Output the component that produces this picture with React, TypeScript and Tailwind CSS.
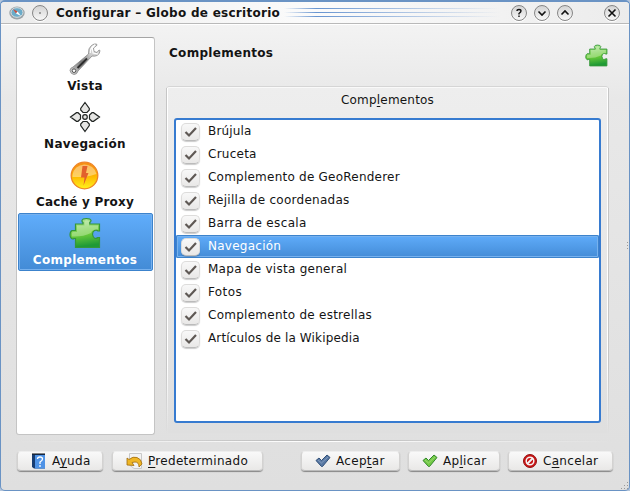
import type { ReactNode } from "react";

function Puzzle({ size, id }: { size: number; id: string }) {
  return (
    <svg width={size} height={size} viewBox="0 0 32 32">
      <defs>
        <linearGradient id={id} x1="0" y1="0" x2="0.15" y2="1">
          <stop offset="0" stopColor="#b5e8a2" />
          <stop offset="0.450" stopColor="#7bd04f" />
          <stop offset="0.600" stopColor="#6ccb3a" />
          <stop offset="1" stopColor="#1f9a35" />
        </linearGradient>
      </defs>
      <path
        d="M6.500 7H14V5.500Q12.700 5 13 3.500Q13.500 1.500 17.500 1.500Q21.500 1.500 22 3.500Q22 5 20.800 5.500V7H30.500V14H29Q27.500 12.500 25.500 13.500Q23.500 14.500 23.500 17.500Q24 20.500 26 21.500Q28 21.500 29 20.500H30.500V30.500H6.500V21.500H5Q4 22.500 2.500 21.500Q1 20 1 18Q1 14.500 3 13.500H6.500Z"
        fill={`url(#${id})`}
        stroke="#35963a"
        strokeWidth="1.200"
      />
      <path d="M8 8.500H15.500V4Q17.500 2.500 20 4V8.500H29V12.500Q23 12 22 16Q14 20 3 19.500Q2.500 15 4 15H8Z" fill="#fff" opacity="0.300" />
    </svg>
  );
}

function Wrench() {
  return (
    <svg width="34" height="34" viewBox="0 0 34 34">
      <defs>
        <linearGradient id="steel" x1="0" y1="1" x2="1" y2="0">
          <stop offset="0" stopColor="#ddd" />
          <stop offset="0.400" stopColor="#777" />
          <stop offset="0.650" stopColor="#c9c9c9" />
          <stop offset="1" stopColor="#eee" />
        </linearGradient>
      </defs>
      <path
        d="M2 28.500Q2 26 5 25L20.500 12Q20 6 23.500 3.500Q26 1.500 28.500 2L29 3.200L25.500 6L26 9.500L29 10.500L31 8L32 8.500Q32 12 29 13.500Q27 14.500 24 14L10 29Q9 32.500 6 32.500Q2.500 32 2 28.500Z"
        fill="url(#steel)"
        stroke="#888"
        strokeWidth="0.800"
      />
      <path d="M9.500 26L19 16.500" stroke="#2d2d2d" strokeWidth="2" />
      <circle cx="6" cy="28.700" r="1.800" fill="#fff" stroke="#555" />
      <path d="M22.300 11Q22 5.500 27 3L24.300 6L25 11L30 12" fill="none" stroke="#fff" strokeWidth="1.200" />
    </svg>
  );
}

function Arrows() {
  return (
    <svg width="32" height="32" viewBox="0 0 32 32" fill="#e6e6e4" stroke="#222624" strokeWidth="1.200">
      <path d="M16 1.500L20.300 7.500V9L18 11.500H14L11.700 9V7.500Z" />
      <path d="M16 30.500L20.300 24.500V23L18 20.500H14L11.700 23V24.500Z" />
      <path d="M1.500 16L7.500 11.700H9L11.500 14V18L9 20.300H7.500Z" />
      <path d="M30.500 16L24.500 11.700H23L20.500 14V18L23 20.300H24.500Z" />
      <circle cx="16" cy="16" r="2.300" />
    </svg>
  );
}

function Bolt() {
  return (
    <svg width="32" height="32" viewBox="0 0 32 32">
      <defs>
        <linearGradient id="amber" x1="0" y1="0" x2="0" y2="1">
          <stop offset="0" stopColor="#f58b16" />
          <stop offset="0.500" stopColor="#fdb400" />
          <stop offset="1" stopColor="#fff21c" />
        </linearGradient>
      </defs>
      <circle cx="15.500" cy="16.500" r="13.300" fill="url(#amber)" stroke="#ee8428" strokeWidth="1.300" />
      <path d="M3.500 16A12.200 12.200 0 0 1 27.500 15Q22 17 15 18Q7 18 3.500 18Z" fill="#fff" opacity="0.380" />
      <path d="M13.500 7H18.500L17 14H19.500L14.500 26.500L15.500 18.500H12Z" fill="#e2602c" />
    </svg>
  );
}

function TitleButton({ children, className = "" }: { children: ReactNode; className?: string }) {
  return (
    <span className={`flex size-4 shrink-0 items-center justify-center rounded-full border-[1.500px] border-[#858585] bg-linear-to-b from-[#d4d4d4] to-[#f8f8f8] shadow-[0_1px_0_#fff] ${className}`}>
      <svg className="shrink-0" width="12" height="12" viewBox="0 0 12 12" fill="none" stroke="#111" strokeWidth="1.600">
        {children}
      </svg>
    </span>
  );
}

function Check() {
  return (
    <span className="mt-[3px] flex h-[18px] w-[19px] shrink-0 items-center justify-center rounded-[5px] border border-[#dddcdb] border-b-[#bbb] bg-linear-to-b from-[#f8f8f8] to-[#e9e8e7] shadow-[0_1px_1px_#0003]">
      <svg className="-ml-px" width="13" height="12" viewBox="0 0 13 12" fill="none" stroke="#5f5955" strokeWidth="2.200">
        <path d="M1.500 6L5 9.500L12 2" />
      </svg>
    </span>
  );
}

function Tick({ fill, stroke }: { fill: string; stroke: string }) {
  return (
    <svg width="16" height="16" viewBox="0 0 16 16">
      <path d="M1 7.500L4 5L6.500 7.500L12 2L15 4.500L7.500 13.500H6.500Z" fill={fill} stroke={stroke} strokeLinejoin="round" />
      <path d="M3 7L6.500 10L13 4" fill="none" stroke="#fff" opacity="0.250" />
    </svg>
  );
}

function Button({ icon, children, className }: { icon: ReactNode; children: ReactNode; className: string }) {
  return (
    <div className={`flex h-5 shrink-0 items-center rounded-[4px] border border-[#d3d2d1] border-t-[#eee] border-b-[#bbb] bg-linear-to-b from-[#f9f9f9] to-[#e9e8e7] pl-[13px] shadow-[0_1px_1px_#00000066] ${className}`}>
      {icon}
      <span className="ml-[5px] whitespace-nowrap leading-[18px]">{children}</span>
    </div>
  );
}

function Key({ children }: { children: ReactNode }) {
  return <span className="underline decoration-1 underline-offset-2">{children}</span>;
}

const pages = [
  { label: "Vista", icon: <Wrench />, track: "tracking-[0.300px]" },
  { label: "Navegación", icon: <Arrows />, track: "tracking-[0.300px]" },
  { label: "Caché y Proxy", icon: <Bolt />, track: "tracking-[0.200px]" },
  { label: "Complementos", icon: <Puzzle size={32} id="puzzleRow" />, track: "tracking-[0.300px]", active: true },
];

const plugins = [
  { label: "Brújula", track: "tracking-[0.150px]" },
  { label: "Cruceta", track: "tracking-[0.250px]" },
  { label: "Complemento de GeoRenderer", track: "tracking-[0.230px]" },
  { label: "Rejilla de coordenadas", track: "tracking-[0.270px]" },
  { label: "Barra de escala", track: "tracking-[0.350px]" },
  { label: "Navegación", track: "tracking-[0.250px]", active: true },
  { label: "Mapa de vista general", track: "tracking-[0.270px]" },
  { label: "Fotos", track: "tracking-[0.400px]" },
  { label: "Complemento de estrellas", track: "tracking-[0.260px]" },
  { label: "Artículos de la Wikipedia", track: "tracking-[0.150px]" },
];

export default function App() {
  return (
    <div className="h-[491px] w-[630px] bg-[#b4c6dc] font-['DejaVu_Sans',sans-serif] text-[12px] text-[#141414]">
      <div className="relative flex h-full flex-col overflow-hidden rounded-[5px] border border-t-2 border-[#6a93c4] bg-linear-to-b from-[#f6f6f6] via-[#e8e8e8] via-20% to-[#dfdfdf]">
        <header className="flex h-[22px] shrink-0 items-center border-b border-[#b9b9b9] bg-linear-to-r from-[#ececec] via-[#fbfbfb] to-[#ececec] pr-[9px] pl-2 shadow-[0_1px_0_#fff]">
          <svg width="16" height="14" viewBox="0 0 16 14">
            <ellipse cx="8" cy="7" rx="7.700" ry="6.500" fill="#9aa3a8" />
            <ellipse cx="8" cy="6.500" rx="6" ry="4.800" fill="#6aabc9" stroke="#d8dddf" />
            <path d="M4 3L8.500 5.500L7 7.500Z" fill="#d34b36" />
            <path d="M8.500 5.500L12 10L7 7.500Z" fill="#fff" />
          </svg>
          <TitleButton className="ml-[7px]"><circle cx="6" cy="6" r="0.700" fill="#222" stroke="none" /></TitleButton>
          <h1 className="ml-[8px] whitespace-nowrap font-bold tracking-[0.280px]">Configurar – Globo de escritorio</h1>
          <div className="ml-1 flex h-[9px] flex-1 flex-col justify-between">
            <i className="h-px bg-linear-to-r from-transparent via-[#6794d0] via-15% to-transparent" />
            <i className="h-px bg-linear-to-r from-transparent via-[#6794d0] via-15% to-transparent" />
            <i className="h-px bg-linear-to-r from-transparent via-[#6794d0] via-15% to-transparent" />
          </div>
          <TitleButton className="ml-[11px]"><path strokeWidth="1.400" d="M4 4Q4 2.500 6 2.500T8 4Q8 5 6 6.500V7.500M6 8.500V10" /></TitleButton>
          <TitleButton className="ml-[7px]"><path d="M2.500 4.500L6 8L9.500 4.500" /></TitleButton>
          <TitleButton className="ml-[7px]"><path d="M2.500 7.500L6 4L9.500 7.500" /></TitleButton>
          <TitleButton className="ml-[31px]"><path d="M2.500 2.500L9.500 9.500M9.500 2.500L2.500 9.500" /></TitleButton>
        </header>

        <main className="mt-[13px] flex h-[398px] shrink-0 pr-[20px] pl-[15px]">
          <nav className="w-[139px] shrink-0 rounded-[3px] border border-[#c4c4c4] border-t-[#a5a5a5] bg-white p-px">
            {pages.map((p) => (
              <div
                key={p.label}
                className={`flex h-[58px] flex-col items-center rounded-[2px] border pt-[3px] pr-px ${p.active ? "border-[#3c83cc] bg-linear-to-b from-[#60adfb] to-[#438bd6] text-white shadow-[inset_0_0_0_1px_#77b1ee]" : "border-transparent"}`}
              >
                <span className="flex h-8 items-center">{p.icon}</span>
                <span className={`mt-[3px] whitespace-nowrap font-bold leading-4 ${p.track}`}>{p.label}</span>
              </div>
            ))}
          </nav>

          <section className="ml-[11px] flex flex-1 flex-col">
            <div className="flex h-[50px] items-start pr-px pl-[3px]">
              <h2 className="mt-[8px] flex-1 font-bold leading-4 tracking-[0.300px]">Complementos</h2>
              <span className="mt-[7px]"><Puzzle size={23} id="puzzleHead" /></span>
            </div>
            <div className="flex h-[346px] rounded-[4px] border-t border-[#f9f9f9] bg-linear-to-b from-[#eee] to-[#dfdfdf] shadow-[0_-1px_0_#d5d5d5]">
              <div className="w-px bg-linear-to-b from-[#c6c6c6] from-80% to-transparent" />
              <div className="w-px bg-linear-to-b from-white from-80% to-transparent" />
              <div className="flex-1 px-[6px]">
                <div className="h-[30px] pt-[4px] text-center leading-4 tracking-[0.200px]">Comp<Key>l</Key>ementos</div>
                <div className="h-[305px] rounded-[3px] border-2 border-[#377bd0] bg-white">
                  {plugins.map((p) => (
                    <div
                      key={p.label}
                      className={`flex h-[23px] pl-[5px] ${p.active ? "rounded-[2px] bg-linear-to-b from-[#60adfb] to-[#438bd6] text-white shadow-[inset_0_0_0_1px_#3c83cc,inset_0_0_0_2px_#77b1ee]" : ""}`}
                    >
                      <Check />
                      <span className={`ml-2 whitespace-nowrap leading-[22px] ${p.track}`}>{p.label}</span>
                    </div>
                  ))}
                </div>
              </div>
              <div className="w-px bg-linear-to-b from-white from-80% to-transparent" />
              <div className="w-px bg-linear-to-b from-[#c6c6c6] from-80% to-transparent" />
            </div>
          </section>
        </main>

        <div className="mx-4 mt-[5px] h-[2px] shrink-0 bg-linear-to-r from-transparent via-white to-transparent">
          <div className="h-px bg-linear-to-r from-transparent via-[#b5b5b5] to-transparent" />
        </div>
        <footer className="mt-[9px] flex shrink-0 pl-4 tracking-[0.300px]">
          <Button
            className="w-[86px]"
            icon={
              <svg width="16" height="16" viewBox="0 0 16 16">
                <path d="M1 1H14V15.500H3L1 14Z" fill="#173d73" />
                <path d="M4 2H14V15.500H4Z" fill="#4f93e6" />
                <path d="M1 1H14" stroke="#111" />
                <path d="M6.500 6Q6.500 4 9 4T11.500 6Q11.500 7.500 9 9V11M9 12V14" fill="none" stroke="#fff" strokeWidth="1.300" />
              </svg>
            }
          >
            A<Key>y</Key>uda
          </Button>
          <Button
            className="ml-[9px] w-[151px]"
            icon={
              <svg width="17" height="16" viewBox="0 0 17 16">
                <path d="M3.500 0.500H15.500V15.500H8L3.500 12Z" fill="#f2f2f2" stroke="#c8c8c8" />
                <path d="M1 5L3 6.500Q7 3 11 4.500Q15.500 6 16 11L13 14Q13 9 9 9L6 9.500L8 12.500L1 12Z" fill="#efb625" stroke="#9f6b0d" strokeWidth="0.800" />
              </svg>
            }
          >
            <Key>P</Key>redeterminado
          </Button>
          <Button className="ml-[38px] w-[99px]" icon={<Tick fill="#5878a3" stroke="#304f78" />}>Acep<Key>t</Key>ar</Button>
          <Button className="ml-2 w-[92px]" icon={<Tick fill="#73c944" stroke="#32872d" />}>Ap<Key>l</Key>icar</Button>
          <Button
            className="ml-2 w-[105px]"
            icon={
              <svg width="16" height="16" viewBox="0 0 16 16">
                <circle cx="8" cy="8" r="6.500" fill="#c91515" stroke="#971010" />
                <circle cx="8" cy="8" r="3.800" fill="none" stroke="#f4f4f4" strokeWidth="1.500" />
                <path d="M5 11L11 5" stroke="#f4f4f4" strokeWidth="1.800" />
              </svg>
            }
          >
            C<Key>a</Key>ncelar
          </Button>
        </footer>
        <svg className="absolute right-0 bottom-0" width="8" height="8" fill="#999">
          <path d="M6 0h1v1h-1zM3 3h1v1h-1zM6 3h1v1h-1zM0 6h1v1h-1zM3 6h1v1h-1zM6 6h1v1h-1z" />
        </svg>
        <svg className="absolute top-[239px] right-0" width="2" height="9" fill="#999">
          <path d="M0 1h1v1h-1zM0 4h1v1h-1zM0 7h1v1h-1z" />
        </svg>
      </div>
    </div>
  );
}
